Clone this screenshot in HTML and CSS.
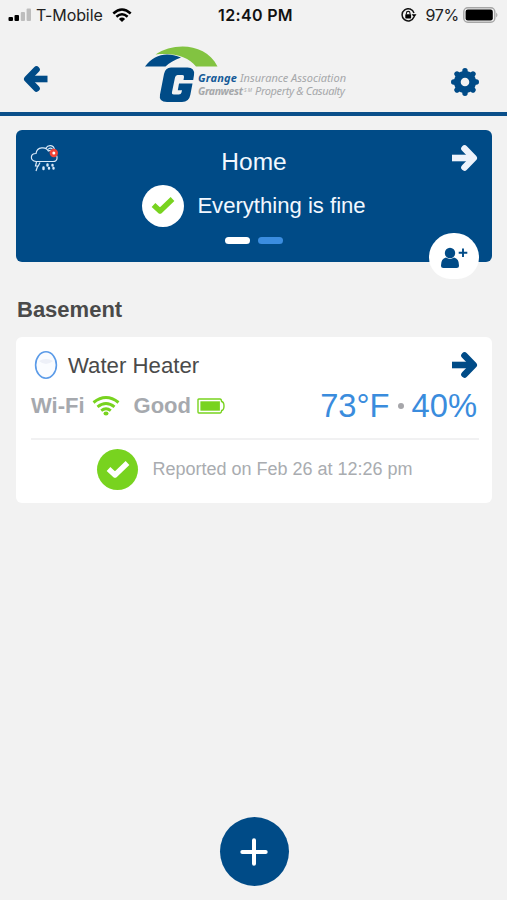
FILE: index.html
```html
<!DOCTYPE html>
<html lang="en">
<head>
<meta charset="utf-8">
<meta name="viewport" content="width=device-width, initial-scale=1">
<title>Home</title>
<link rel="stylesheet" href="styles.css">
</head>
<body>
<div class="status">
  <div class="status-left">
    <svg width="24" height="14" viewBox="0 0 24 14"><rect x="0.5" y="9" width="4.5" height="4" rx="1"/><rect x="6.5" y="7" width="4.5" height="6" rx="1"/><rect x="12.8" y="4" width="4.2" height="9" rx="1" fill="#bdbdbd"/><rect x="18.6" y="0.5" width="4.4" height="12.5" rx="1" fill="#bdbdbd"/></svg>
    <span class="carrier">T-Mobile</span>
    <svg width="20" height="15" viewBox="0 0 20 15" fill="none" stroke="#000" stroke-width="2.5"><path d="M1.3 5.5Q10-2.5 18.7 5.5"/><path d="M4.4 8.7Q10 3.7 15.6 8.7"/><path d="M10 14 6.9 10.9Q10 8.3 13.1 10.9Z" fill="#000" stroke="none"/></svg>
  </div>
  <div class="clock">12:40 PM</div>
  <div class="status-right">
    <svg width="16" height="14" viewBox="0 0 16 14"><path d="M12.9 9A6.1 6.1 0 1 1 13 5" fill="none" stroke="#111" stroke-width="1.5"/><path d="M10.7 6.2h4.8l-2.3 3.2z"/><rect x="4.3" y="6.2" width="5.800" height="4.200" rx=".6"/><path d="M5.400 6.500V5.200a1.800 1.800 0 0 1 3.600 0v1.300" fill="none" stroke="#111" stroke-width="1.100"/></svg>
    <span class="percent">97%</span>
    <svg width="36" height="16" viewBox="0 0 36 16"><rect x=".8" y=".8" width="31" height="14.400" rx="4" fill="none" stroke="#a6a6a6" stroke-width="1.400"/><rect x="2.600" y="2.600" width="27.200" height="10.800" rx="2.200"/><path d="M33.200 5.500q2.500 2.500 0 5z" fill="#a6a6a6"/></svg>
  </div>
</div>
<header class="header">
  <svg class="back" width="26" height="28" viewBox="0 0 26 28" fill="none" stroke="#004b87" stroke-width="6.6" stroke-linejoin="round"><path d="M6 14H25.500"/><path d="M14.500 4.500 5.300 14 14.500 23.500" stroke-linecap="round"/></svg>
  <svg class="logo" width="210" height="62" viewBox="0 0 210 62">
    <path d="M15.500 9.500C34-3 66-2 77.500 21.500H56C49 12 34 7.500 15.500 9.500Z" fill="#82c341"/>
    <path d="M5 21.500C14 9 27 6.500 41 12.500C34 15 29 18 25.500 21.500Z" fill="#004b87"/>
    <path d="M31 22.500H47.500Q55 22.500 54 30L53.200 35H43.500L44 32Q44.300 30 42.500 30H37.500Q35.500 30 35 32.500L32 47Q31.500 49.500 33.800 49.500H38.800Q41 49.500 41.500 47.500L42 45.300H37.800L39 38.500H52.500L50.300 50Q49 57 42 57H27Q18.500 57 20 49.500L24 29Q25.300 22.500 31 22.500Z" fill="#004b87" stroke="#f2f2f2" stroke-width="2" paint-order="stroke"/>
    <text x="58" y="36.500" class="logo-name" textLength="39">Grange</text>
    <text x="100" y="36.500" class="logo-light" textLength="106">Insurance Association</text>
    <text x="58" y="50" class="logo-sub" textLength="45">Granwest</text>
    <text x="104" y="47" class="logo-mark" textLength="8">SM</text>
    <text x="115" y="50" class="logo-light" textLength="90">Property &amp; Casualty</text>
  </svg>
  <svg class="gear" width="30" height="30" viewBox="-15 -15 30 30"><circle r="7.700" fill="none" stroke="#004b87" stroke-width="6.800"/><path d="M0-9.500V-11.300M0 9.500V11.300M-9.500 0H-11.300M9.500 0H11.300M-7-7-8-8M7 7 8 8M-7 7-8 8M7-7 8-8" stroke="#004b87" stroke-linecap="round" stroke-width="5.400"/></svg>
</header>
<main class="main">
  <section class="home-card">
    <svg class="weather" width="30" height="29" viewBox="0 0 30 29" fill="none" stroke="#d9e9f8" stroke-width="1.200"><path d="M6 17.500C-.5 16.500.2 9.500 6 9.500C7 2.500 16 2.500 18.300 7C21 5.500 24 7 24 10C28 10.500 28.500 17.500 23 17.500Z"/><path d="M16 4C18 .5 24 .5 24.500 6M18 5.500Q20 3 22.500 5"/><path d="M6.500 18 5.500 22H7.700L6 27M10 18.500 8 22.500"/><path d="M13.500 23.500v1.500M17.500 20.500v1M19 24v.5M22.500 21v.5M23.500 24v.5" stroke-width="2.400" stroke-linecap="round"/><circle cx="23.800" cy="9" r="4.200" fill="#f04438" stroke="none"/><circle cx="23.800" cy="9" r="1.500" fill="#fff" stroke="none"/></svg>
    <h1 class="home-title">Home</h1>
    <svg class="home-arrow" width="27" height="28" viewBox="0 0 27 28" fill="none" stroke="#eef3fb" stroke-width="6.600" stroke-linejoin="round"><path d="M1 14H21"/><path d="M13.500 4.500 22.700 14 13.500 23.500" stroke-linecap="round"/></svg>
    <div class="home-state">
      <span class="check white"><svg width="24" height="19" viewBox="0 0 24 19" fill="none" stroke="#78d31f" stroke-width="5.400" stroke-linejoin="round"><path d="M2.500 9 9 15 21.500 3"/></svg></span>
      <span>Everything is fine</span>
    </div>
    <div class="pager"><i class="page on"></i><i class="page"></i></div>
    <div class="invite"><svg width="28" height="22" viewBox="0 0 28 22" fill="#004b87"><circle cx="10" cy="6" r="5.200"/><path d="M6 10.500Q10 13.300 14 10.500Q19 11.500 19 18.500Q19 21 16.500 21H3.500Q1 21 1 18.500Q1 11.500 6 10.500Z"/><path d="M18.700 5.700h8.600M23 1.400V10" stroke="#004b87" stroke-width="1.900"/></svg></div>
  </section>
  <h2 class="room">Basement</h2>
  <section class="device">
    <div class="device-top">
      <svg width="24" height="30" viewBox="0 0 24 30"><ellipse cx="12" cy="15" rx="10.400" ry="13.200" fill="#fafcff" stroke="#5b9be8" stroke-width="1.600"/><path d="M5 11Q12 7 19 11Q12 17 5 11Z" fill="#edf0f8"/></svg>
      <span class="device-name">Water Heater</span>
      <svg class="device-arrow" width="27" height="28" viewBox="0 0 27 28" fill="none" stroke="#004b87" stroke-width="6.600" stroke-linejoin="round"><path d="M1 14H21"/><path d="M13.500 4.500 22.700 14 13.500 23.500" stroke-linecap="round"/></svg>
    </div>
    <div class="readings">
      <span class="label">Wi-Fi</span>
      <svg class="wifi" width="28" height="20" viewBox="0 0 28 20" fill="none" stroke="#78d31f" stroke-width="2.900"><path d="M1.500 6.500Q14-3.500 26.500 6.500M5.500 10.800Q14 4 22.500 10.800M9.200 14.600Q14 10.800 18.800 14.600"/><ellipse cx="14" cy="17.500" rx="2.500" ry="1.900" fill="#78d31f" stroke="none"/></svg>
      <span class="label">Good</span>
      <svg class="battery" width="28" height="16" viewBox="0 0 28 16"><path d="M1.800 1H23Q24.400 1 24.600 3.500Q27 4 27 8T24.600 12.500Q24.400 15 23 15H1.800Q1 15 1 14V2Q1 1 1.800 1Z" fill="none" stroke="#78d31f" stroke-width="1.400"/><rect x="3.400" y="3.300" width="19.500" height="9.400" fill="#78d31f"/></svg>
      <span class="values">73°F<i class="dot"></i>40%</span>
    </div>
    <div class="report">
      <span class="check green"><svg width="24" height="19" viewBox="0 0 24 19" fill="none" stroke="#fff" stroke-width="5.400" stroke-linejoin="round"><path d="M2.500 9 9 15 21.500 3"/></svg></span>
      <span>Reported on Feb 26 at 12:26 pm</span>
    </div>
  </section>
</main>
<footer class="footer">
  <div class="add"><svg width="28" height="28" viewBox="0 0 28 28" stroke="#fff" stroke-width="4" stroke-linecap="round"><path d="M14 2.300V25.700M2.300 14H25.700"/></svg></div>
</footer>
</body>
</html>
```
FILE: styles.css
```css
* { box-sizing: border-box; }
body {
  margin: 0;
  height: 900px;
  display: flex;
  flex-direction: column;
  background: #f2f2f2;
  font-family: "Liberation Sans", Arial, sans-serif;
  overflow: hidden;
}
svg { display: block; flex: none; }
h1, h2 { margin: 0; }

.status {
  display: grid;
  grid-template-columns: 1fr auto 1fr;
  align-items: center;
  height: 30px;
  padding: 0 8px;
  font: 16px/30px Inter, "Liberation Sans", sans-serif;
  color: #111;
}
.status-left, .status-right { display: flex; align-items: center; }
.status-right { justify-content: flex-end; }
.carrier { margin: 0 9px 0 4px; letter-spacing: -.1px; color: #222; }
.clock { font-weight: 600; font-size: 16px; letter-spacing: .35px; margin-left: 4px; }
.percent { margin: 0 4px 0 9px; font-size: 16px; letter-spacing: -.3px; color: #222; }

.header {
  display: flex;
  align-items: flex-start;
  height: 86px;
  padding: 0 27px 0 22px;
  border-bottom: 4px solid #0a4f8a;
}
.back { margin-top: 35px; }
.logo { margin: 15px 0 0 92px; }
.gear { margin: 37px 0 0 auto; }
.logo text { font-family: "Noto Sans", "Open Sans", sans-serif; font-style: italic; font-size: 11px; }
.logo .logo-name { font-weight: 700; fill: #155a98; }
.logo .logo-sub { font-weight: 700; font-size: 10.5px; fill: #a6a8aa; }
.logo .logo-light { fill: #a6a8aa; }
.logo .logo-mark { font-size: 5px; fill: #a6a8aa; }

.main { flex: 1; padding: 14px 15px 0 16px; }
.home-card {
  position: relative;
  display: grid;
  grid-template-columns: 30px 1fr 30px;
  grid-template-rows: 53px 45px 26px;
  height: 132px;
  padding: 0 14px;
  border-radius: 6px;
  background: #004b87;
  color: #f2f8ff;
}
.weather { margin-top: 14px; }
.home-title { font-weight: 400; font-size: 24.5px; line-height: 30px; padding-top: 17px; text-align: center; }
.home-arrow { margin-top: 14px; justify-self: end; }
.home-state {
  grid-column: 1 / -1;
  display: flex;
  align-items: center;
  justify-content: center;
  gap: 13px;
  font-size: 22.1px;
}
.check { display: flex; align-items: center; justify-content: center; width: 42px; height: 42px; border-radius: 50%; }
.check.white { background: #fff; }
.check.green { background: #78d31f; width: 41px; height: 41px; }
.pager { grid-column: 1 / -1; display: flex; justify-content: center; gap: 8px; padding-top: 9px; }
.page { width: 25px; height: 7px; border-radius: 4px; background: #3b8de0; }
.page.on { background: #fff; }
.invite {
  position: absolute;
  right: 13px;
  bottom: -17px;
  display: flex;
  justify-content: center;
  width: 50px;
  height: 46px;
  padding-top: 14px;
  border-radius: 25px 25px 22px 22px;
  background: #fff;
}

.room { margin-top: 34px; padding-left: 1px; font-size: 22px; line-height: 28px; color: #4a4a4a; }
.device { margin-top: 13px; height: 166px; padding: 0 13px 0 15px; border-radius: 6px; background: #fff; }
.device-top { display: flex; align-items: center; padding-top: 13px; padding-left: 3px; height: 43px; }
.device-name { margin-left: 10px; padding-top: 1px; font-size: 22.2px; color: #4a4a4a; }
.device-arrow { margin-left: auto; margin-right: 1px; }
.readings { display: flex; align-items: center; height: 60px; padding-bottom: 7px; border-bottom: 2px solid #f1f1f2; color: #a6a9ae; }
.label { font-weight: 700; font-size: 22px; }
.wifi { margin: 0 14px 0 7px; }
.battery { margin-left: 6px; }
.values { display: flex; align-items: center; margin-left: auto; margin-right: 2px; font-size: 32.7px; color: #3a8cdd; }
.dot { width: 6px; height: 6px; margin: 0 8px; border-radius: 50%; background: #a6a6aa; }
.report { display: flex; align-items: center; justify-content: center; gap: 14px; height: 57px; padding-top: 1px; font-size: 18px; color: #a9acb0; }

.footer { display: flex; justify-content: center; padding: 0 0 14px 1px; }
.add { display: flex; align-items: center; justify-content: center; width: 69px; height: 69px; border-radius: 50%; background: #004b87; }
```
